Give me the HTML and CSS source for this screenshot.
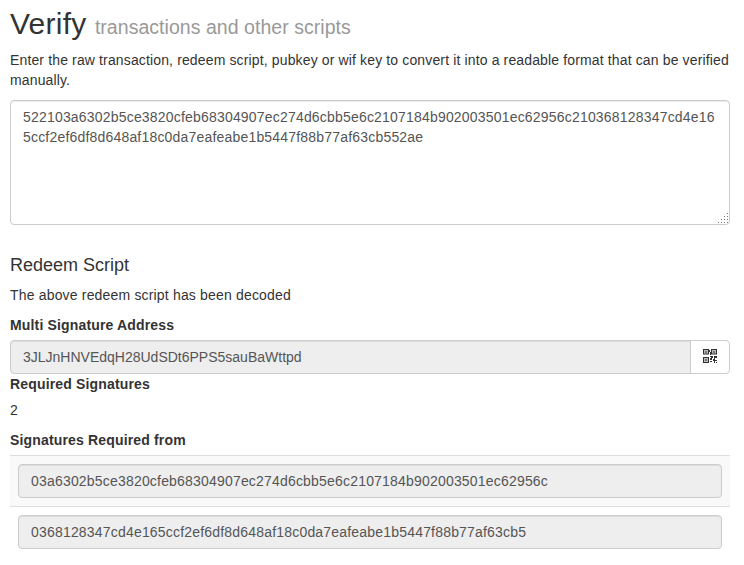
FILE: index.html
```
<!DOCTYPE html>
<html lang="en">
<head>
<meta charset="utf-8">
<title>Verify</title>
<link rel="stylesheet" href="styles.css">
</head>
<body>
<main class="page">
<h2><span class="title">Verify</span> <small>transactions and other scripts</small></h2>
<p class="intro">Enter the raw transaction, redeem script, pubkey or wif key to convert it into a readable format that can be verified manually.</p>
<div class="script-box">
<textarea class="control script" spellcheck="false" aria-label="Script">522103a6302b5ce3820cfeb68304907ec274d6cbb5e6c2107184b902003501ec62956c210368128347cd4e165ccf2ef6df8d648af18c0da7eafeabe1b5447f88b77af63cb552ae</textarea>
<svg class="grip" width="10" height="10" viewBox="0 0 10 10" fill="#777" shape-rendering="crispEdges"><path d="M9 0h1v1h-1zM6 3h1v1h-1zM9 3h1v1h-1zM3 6h1v1h-1zM6 6h1v1h-1zM9 6h1v1h-1zM0 9h1v1h-1zM3 9h1v1h-1zM6 9h1v1h-1zM9 9h1v1h-1z"/></svg>
</div>
<section>
<h4>Redeem Script</h4>
<p class="decoded">The above redeem script has been decoded</p>
<label class="l-address">Multi Signature Address</label>
<div class="input-group">
<input class="control address" type="text" readonly value="3JLJnHNVEdqH28UdSDt6PPS5sauBaWttpd">
<button class="qr" type="button" aria-label="QR code">
<svg width="14" height="14" viewBox="0 0 14 14"><path fill="#bbb" d="M1 1h4v4H1zM9 1h4v4H9zM1 9h4v4H1z"/><path fill="#333" fill-rule="evenodd" d="M0 0h6v5.5H0zM1 1v3.6h4V1zM8 0h6v5.5H8zM9 1v3.6h4V1zM0 8h6v6H0zM1 9v4h4V9zM6 1h1v2H6zM7 3h1v3H7zM7 7h3v2H9v2H7V9h1V8H7zM11 7h3v2h-2v1h-1zM10 10h2v1h2v1h-2v2h-1v-2h-1zM7 12h2v1H7zM13 13h1v1h-1z"/><path fill="#777" d="M2 2h2v2H2zM10 2h2v2h-2zM2 10h2v2H2z"/></svg>
</button>
</div>
<label class="l-required">Required Signatures</label>
<p>2</p>
<label class="l-from">Signatures Required from</label>
<table>
<tbody>
<tr><td><input class="control key-one" type="text" readonly value="03a6302b5ce3820cfeb68304907ec274d6cbb5e6c2107184b902003501ec62956c"></td></tr>
<tr><td><input class="control key-two" type="text" readonly value="0368128347cd4e165ccf2ef6df8d648af18c0da7eafeabe1b5447f88b77af63cb5"></td></tr>
</tbody>
</table>
</section>
</main>
</body>
</html>
```
FILE: styles.css
```
* { box-sizing: border-box; }
body {
  margin: 0;
  background: #fff;
  color: #333;
  font: 14px/20px "Liberation Sans", Arial, sans-serif;
}
.page { width: 720px; margin-left: 10px; padding-top: 7px; }
h2, h4 { font-weight: 400; margin: 0 0 10px; }
h2 { font-size: 30px; line-height: 33px; height: 33px; }
.title { letter-spacing: .25px; }
h2 small { font-size: 19.5px; line-height: 1; color: #999; letter-spacing: .04px; }
h4 { font-size: 18px; line-height: 20px; }
p { margin: 0 0 10px; }
.intro { letter-spacing: .138px; }
.decoded { letter-spacing: .175px; }
label { display: block; width: max-content; font-weight: 700; margin-bottom: 5px; letter-spacing: .16px; }
.control {
  display: block;
  width: 100%;
  height: 34px;
  margin: 0;
  padding: 6px 12px;
  font: inherit;
  letter-spacing: .19px;
  color: #555;
  background: #eee;
  border: 1px solid #ccc;
  border-radius: 4px;
  box-shadow: inset 0 1px 1px rgba(0, 0, 0, .075);
  outline: 0;
}
.script-box { position: relative; margin-bottom: 30px; }
.script {
  height: 125px;
  background: #fff;
  resize: none;
  overflow: hidden;
  word-break: break-all;
}
.grip { position: absolute; right: 2px; bottom: 2px; }
.input-group { display: flex; }
.address { flex: 1; width: auto; border-radius: 4px 0 0 4px; letter-spacing: 0; }
.qr {
  display: flex;
  align-items: center;
  justify-content: center;
  width: 40px;
  height: 34px;
  margin-left: -1px;
  padding: 0;
  background: #fff;
  border: 1px solid #ccc;
  border-radius: 0 4px 4px 0;
}
.qr svg { position: relative; top: -1px; }
.l-required { margin-bottom: 6px; }
table { width: 100%; border-collapse: separate; border-spacing: 0; }
td { padding: 8px; border-top: 1px solid #ddd; }
tr:first-child td { background: #f9f9f9; }
```
